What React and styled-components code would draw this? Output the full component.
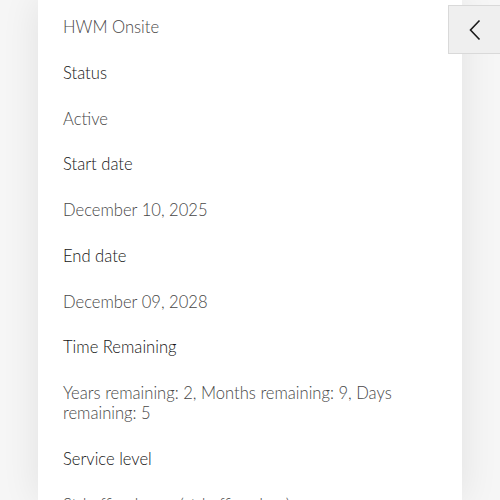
import styled, { createGlobalStyle } from "styled-components"

const GlobalStyle = createGlobalStyle`
    html, body {
        margin: 0;
        padding: 0;
        background-color: #f6f6f6;
        overflow: hidden;
    }

    * {
        box-sizing: border-box;
    }
`

const StyledPage = styled.div`
    position: relative;
    height: 500px;
    display: flex;
    justify-content: center;
    overflow: hidden;

    font-family: Lato, "Noto Sans", sans-serif;
    font-weight: 300;
`

const Panel = styled.section`
    width: 424px;
    height: 100%;
    background-color: #fff;
    box-shadow: 0 0 36px rgba(0, 0, 0, 0.09);

    padding: 17px 25px 0;

    dl {
        margin: 0;
    }
`

const Field = styled.div`
    dt, dd {
        margin: 0;
        font-size: 16.6px;
        line-height: 20px;
        padding-bottom: 25.75px;
    }

    dt {
        color: #151515;
    }

    dd {
        color: #474747;
    }
`

const CollapseButton = styled.button`
    position: absolute;
    top: 5px;
    right: -1px;

    width: 53px;
    height: 49px;

    display: flex;
    align-items: center;
    justify-content: center;

    background-color: #efefef;
    border: 1px solid #d9d9d9;
    padding: 0;
    cursor: pointer;

    svg {
        width: 14px;
        height: 22px;
    }
`

const details = [
    { label: null, value: "HWM Onsite" },
    { label: "Status", value: "Active" },
    { label: "Start date", value: "December 10, 2025" },
    { label: "End date", value: "December 09, 2028" },
    { label: "Time Remaining", value: "Years remaining: 2, Months remaining: 9, Days remaining: 5" },
    { label: "Service level", value: "Std office hours (std office days)" },
]

export default function App() {
    return (
        <>
            <GlobalStyle />
            <StyledPage>
                <Panel>
                    <dl>
                        {details.map((item, i) => (
                            <Field key={i}>
                                {item.label && <dt>{item.label}</dt>}
                                <dd>{item.value}</dd>
                            </Field>
                        ))}
                    </dl>
                </Panel>
                <CollapseButton aria-label="Collapse">
                    <svg viewBox="0 0 14 22" fill="none">
                        <path d="M11.5 1.5 L2.5 11 L11.5 20.5" stroke="#1a1a1a" strokeWidth="1.6" />
                    </svg>
                </CollapseButton>
            </StyledPage>
        </>
    )
}
